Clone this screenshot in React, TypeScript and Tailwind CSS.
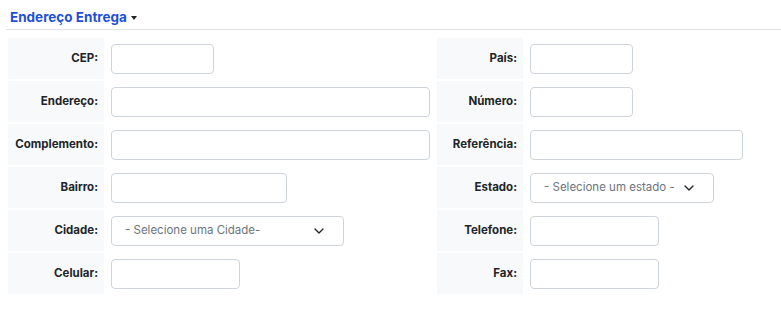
import { ChevronDown } from "lucide-react";

type Field = { label: string; width: number; select?: string };

const rows: [Field, Field][] = [
  [{ label: "CEP:", width: 103 }, { label: "País:", width: 103 }],
  [{ label: "Endereço:", width: 319 }, { label: "Número:", width: 103 }],
  [{ label: "Complemento:", width: 319 }, { label: "Referência:", width: 213 }],
  [{ label: "Bairro:", width: 176 }, { label: "Estado:", width: 184, select: "- Selecione um estado -" }],
  [{ label: "Cidade:", width: 233, select: "- Selecione uma Cidade-" }, { label: "Telefone:", width: 129 }],
  [{ label: "Celular:", width: 129 }, { label: "Fax:", width: 129 }],
];

function Control({ field }: { field: Field }) {
  if (field.select) {
    return (
      <div
        className="h-[30px] rounded-[4px] border border-[#ced4da] bg-white flex items-center justify-between pl-[13px] pr-[16px] text-[11.5px] text-[#6c757d]"
        style={{ width: field.width }}
      >
        <span>{field.select}</span>
        <ChevronDown className="w-4 h-4 text-[#212529]" strokeWidth={2} />
      </div>
    );
  }
  return (
    <input
      className="h-[30px] rounded-[4px] border border-[#ced4da] bg-white outline-none"
      style={{ width: field.width }}
    />
  );
}

function Label({ text }: { text: string }) {
  return (
    <div className="bg-[#f8f9fa] flex items-center justify-end pr-[6px] text-[11.5px] font-bold text-[#212529]">
      {text}
    </div>
  );
}

export default function App() {
  return (
    <div className="w-[781px] h-[310px] bg-white" style={{ fontFamily: "Inter, 'Noto Sans', sans-serif" }}>
      <div className="ml-[6px] border-b border-[#dee2e6] pl-[4px] pt-[9px] pb-[4px] flex items-center gap-[4px]">
        <span className="text-[13.5px] leading-[16px] font-bold text-[#1f4fd6]">Endereço Entrega</span>
        <span className="w-0 h-0 border-l-[3.5px] border-r-[3.5px] border-t-[4px] border-l-transparent border-r-transparent border-t-[#212529] mt-[2px]" />
      </div>
      <div className="ml-[6px] p-[2px] pt-[8px] grid grid-cols-[96px_329px_86px_254px] auto-rows-[41px] gap-[2px]">
        {rows.map(([l, r]) => (
          <div key={l.label} className="contents">
            <Label text={l.label} />
            <div className="flex items-center pl-[5px]">
              <Control field={l} />
            </div>
            <Label text={r.label} />
            <div className="flex items-center pl-[5px]">
              <Control field={r} />
            </div>
          </div>
        ))}
      </div>
    </div>
  );
}
